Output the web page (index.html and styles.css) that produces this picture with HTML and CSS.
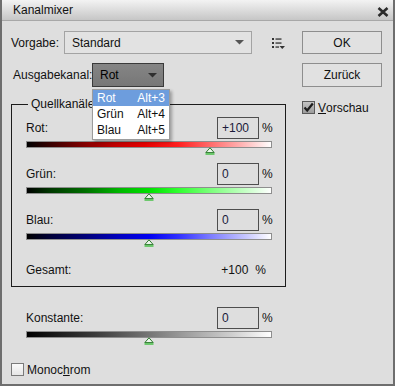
FILE: index.html
```html
<!DOCTYPE html>
<html lang="de">
<head>
  <meta charset="UTF-8" />
  <title>Kanalmixer</title>
  <link rel="stylesheet" href="styles.css">
</head>
<body>
  <div class="window">
    <div class="titlebar">
      <span class="title">Kanalmixer</span>
      <svg class="close" width="12" height="10" viewBox="0 0 12 10">
        <path d="M1.5 1 L10.5 9 M10.5 1 L1.5 9" stroke="#2b2b2b" stroke-width="2.6" />
      </svg>
    </div>
    <div class="content">
      <div class="main">
        <div class="row preset-row">
          <span class="preset-lbl">Vorgabe:</span>
          <div class="select">
            <span>Standard</span>
            <svg width="9" height="5" viewBox="0 0 9 5"><polygon points="0,0 9,0 4.5,4.5" fill="#555" /></svg>
          </div>
          <svg class="list-icon" width="13" height="11" viewBox="0 0 13 11">
            <rect x="0" y="0" width="2" height="2" fill="#333" />
            <rect x="3.5" y="0.4" width="6" height="1.3" fill="#333" />
            <rect x="0" y="4" width="2" height="2" fill="#333" />
            <rect x="3.5" y="4.4" width="6" height="1.3" fill="#333" />
            <rect x="0" y="8" width="2" height="2" fill="#333" />
            <rect x="3.5" y="8.4" width="3.5" height="1.3" fill="#333" />
            <polygon points="7.5,8 13,8 10.25,11" fill="#333" />
          </svg>
        </div>
        <div class="row output-row">
          <span class="output-lbl">Ausgabekanal:</span>
          <div class="dark-select">
            <span>Rot</span>
            <svg width="9" height="5" viewBox="0 0 9 5"><polygon points="0,0 9,0 4.5,4.5" fill="#2e2e2e" /></svg>
            <ul class="dropdown">
              <li class="active"><span>Rot</span><span>Alt+3</span></li>
              <li><span>Grün</span><span>Alt+4</span></li>
              <li><span>Blau</span><span>Alt+5</span></li>
            </ul>
          </div>
        </div>

        <fieldset class="group">
          <legend>Quellkanäle</legend>
          <div class="chan">
            <div class="chan-top"><span class="chan-name">Rot:</span><div class="num">+100</div><span class="pct">%</span></div>
            <div class="track red">
              <svg class="thumb" style="left:75%" width="10" height="8" viewBox="0 0 10 8"><polygon points="5,0.8 9.2,5.6 0.8,5.6" fill="#eef6ee" stroke="#2d7a2d" stroke-width="1" /><rect x="0.5" y="6.3" width="9" height="1.4" fill="#3fbf3f" /></svg>
            </div>
          </div>
          <div class="chan">
            <div class="chan-top"><span class="chan-name">Grün:</span><div class="num">0</div><span class="pct">%</span></div>
            <div class="track green">
              <svg class="thumb" style="left:50%" width="10" height="8" viewBox="0 0 10 8"><polygon points="5,0.8 9.2,5.6 0.8,5.6" fill="#eef6ee" stroke="#2d7a2d" stroke-width="1" /><rect x="0.5" y="6.3" width="9" height="1.4" fill="#3fbf3f" /></svg>
            </div>
          </div>
          <div class="chan">
            <div class="chan-top"><span class="chan-name">Blau:</span><div class="num">0</div><span class="pct">%</span></div>
            <div class="track blue">
              <svg class="thumb" style="left:50%" width="10" height="8" viewBox="0 0 10 8"><polygon points="5,0.8 9.2,5.6 0.8,5.6" fill="#eef6ee" stroke="#2d7a2d" stroke-width="1" /><rect x="0.5" y="6.3" width="9" height="1.4" fill="#3fbf3f" /></svg>
            </div>
          </div>
          <div class="total">
            <span class="chan-name">Gesamt:</span>
            <span>+100</span>
            <span class="total-pct">%</span>
          </div>
        </fieldset>

        <div class="const">
          <div class="chan">
            <div class="chan-top"><span class="chan-name">Konstante:</span><div class="num">0</div><span class="pct">%</span></div>
            <div class="track gray">
              <svg class="thumb" style="left:50%" width="10" height="8" viewBox="0 0 10 8"><polygon points="5,0.8 9.2,5.6 0.8,5.6" fill="#eef6ee" stroke="#2d7a2d" stroke-width="1" /><rect x="0.5" y="6.3" width="9" height="1.4" fill="#3fbf3f" /></svg>
            </div>
          </div>
        </div>

        <label class="check mono"><span class="box"></span>Monoc<u>h</u>rom</label>
      </div>

      <div class="side">
        <button class="btn">OK</button>
        <button class="btn btn-back">Zurück</button>
        <label class="check preview">
          <span class="box checked">
            <svg width="11" height="11" viewBox="0 0 11 11"><path d="M1.5 5.5 L4.2 8.5 L9.8 1.5" fill="none" stroke="#1e1e1e" stroke-width="2.2" /></svg>
          </span><u>V</u>orschau
        </label>
      </div>
    </div>
  </div>
</body>
</html>
```

FILE: styles.css
```css
body {
  margin: 0;
  padding: 0;
  background: #dedede;
  font-family: "Liberation Sans", Arial, sans-serif;
  font-size: 12px;
  color: #111;
}
.window {
  width: 395px;
  height: 386px;
  box-sizing: border-box;
  background: #dedede;
  border-left: 2px solid #6e6e6e;
  border-right: 2px solid #6e6e6e;
  border-bottom: 2px solid #6e6e6e;
}
.titlebar {
  height: 20px;
  border-bottom: 1px solid #a8a8a8;
  background: linear-gradient(#f3f3f3, #c6c6c6);
  display: flex;
  align-items: center;
  justify-content: space-between;
  padding: 0 4px 0 11px;
}
.title {
  color: #111;
}
.close {
  margin-top: 3px;
}
.content {
  display: flex;
  padding: 10px 0 0 9px;
}
.main {
  width: 275px;
}
.row {
  display: flex;
  align-items: center;
}
.preset-row {
  height: 23px;
}
.preset-lbl {
  width: 53px;
}
.select {
  width: 188px;
  height: 23px;
  box-sizing: border-box;
  border: 1px solid #a3a3a3;
  background: #e2e2e2;
  display: flex;
  align-items: center;
  justify-content: space-between;
  padding: 0 7px 0 7px;
}
.list-icon {
  margin-left: 20px;
  margin-top: 2px;
}
.output-row {
  margin-top: 9px;
  height: 24px;
}
.output-lbl {
  margin-left: 2px;
  width: 79px;
}
.dark-select {
  position: relative;
  width: 72px;
  height: 24px;
  box-sizing: border-box;
  border: 1px solid #3a3a3a;
  background: linear-gradient(#858585, #777);
  display: flex;
  align-items: center;
  justify-content: space-between;
  padding: 0 6px 0 7px;
  color: #000;
}
.dropdown {
  position: absolute;
  top: calc(100% + 3px);
  left: -1px;
  width: 78px;
  box-sizing: border-box;
  margin: 0;
  padding: 0 0 1px;
  list-style: none;
  background: #fff;
  border: 1px solid #9c9c9c;
  box-shadow: 2px 2px 3px rgba(0, 0, 0, 0.3);
  z-index: 10;
}
.dropdown li {
  display: flex;
  justify-content: space-between;
  height: 16px;
  line-height: 16px;
  padding: 0 4px 0 4px;
  color: #111;
}
.dropdown li.active {
  background: #6d9ddd;
  color: #fff;
}
.group {
  margin: 10px 0 0;
  width: 275px;
  box-sizing: border-box;
  padding: 6px 13px 8px 14px;
  border: 1px solid #1c1c1c;
  min-width: 0;
}
.group legend {
  padding: 0 3px;
  margin-left: 2px;
  line-height: 14px;
}
.chan {
  height: 46px;
}
.chan-top {
  display: flex;
  align-items: center;
  height: 22px;
}
.chan-name {
  flex: 1;
}
.num {
  width: 42px;
  height: 22px;
  box-sizing: border-box;
  border: 1px solid #4e4e4e;
  padding-left: 4px;
  line-height: 20px;
  color: #1a1a3a;
}
.pct {
  width: 13px;
  padding-left: 3px;
  box-sizing: border-box;
}
.track {
  position: relative;
  margin-top: 2px;
  height: 7px;
  box-sizing: border-box;
  border: 1px solid #8e8e8e;
}
.track.red {
  background: linear-gradient(to right, #000 0%, #3a0000 10%, #7a0000 22%, #c00000 36%, #e60000 48%, #ff2020 62%, #ff6a6a 75%, #ffb4b4 88%, #fff 100%);
}
.track.green {
  background: linear-gradient(to right, #000 0%, #003a00 10%, #007000 24%, #00b800 38%, #00e000 50%, #30ff30 62%, #80ff80 76%, #c8ffc8 90%, #fff 100%);
}
.track.blue {
  background: linear-gradient(to right, #000 0%, #00003a 10%, #000078 24%, #0000c0 38%, #0000f0 50%, #3030ff 62%, #8080ff 76%, #c8c8ff 90%, #fff 100%);
}
.track.gray {
  background: linear-gradient(to right, #000 0%, #1a1a1a 12%, #3c3c3c 28%, #707070 48%, #a0a0a0 66%, #cfcfcf 84%, #fff 100%);
}
.thumb {
  position: absolute;
  top: 5px;
  transform: translateX(-50%);
}
.total {
  display: flex;
  align-items: center;
  margin-top: 7px;
  height: 16px;
  padding-right: 6px;
}
.total-pct {
  margin-left: 7px;
}
.const {
  margin-top: 20px;
  padding: 0 14px 0 15px;
}
.check {
  display: flex;
  align-items: center;
  height: 13px;
}
.check u {
  text-decoration-thickness: 1px;
}
.box {
  width: 13px;
  height: 13px;
  box-sizing: border-box;
  border: 1px solid #7a7a7a;
  background: linear-gradient(#fafafa, #e6e6e6);
  margin-right: 3px;
  display: flex;
  align-items: center;
  justify-content: center;
}
.box.checked {
  border-color: #5a5a5a;
  background: linear-gradient(#c4c4c4, #9c9c9c);
}
.mono {
  margin-top: 10px;
}
.side {
  width: 80px;
  margin-left: 16px;
  display: flex;
  flex-direction: column;
}
.btn {
  height: 23px;
  padding: 0;
  font-family: inherit;
  font-size: 12px;
  color: #111;
  background: #e1e1e1;
  border: 1px solid #8e8e8e;
  border-radius: 0;
}
.btn-back {
  margin-top: 9px;
  height: 24px;
}
.preview {
  margin-top: 14px;
}
```
